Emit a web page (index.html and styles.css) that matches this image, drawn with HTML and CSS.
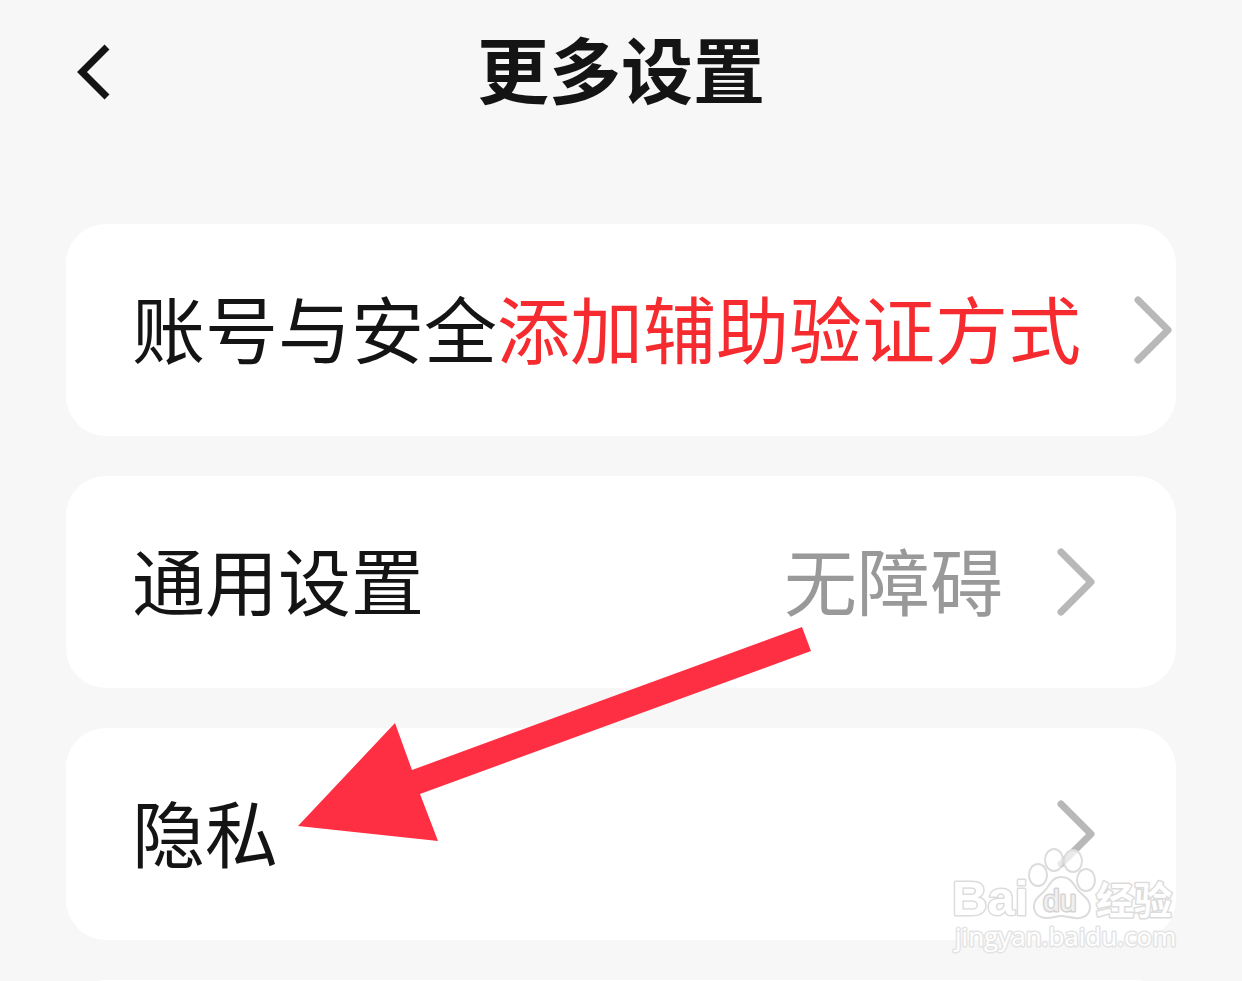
FILE: index.html
```html
<!DOCTYPE html>
<html lang="zh-CN">
<head>
	<meta charset="utf-8">
	<meta name="viewport" content="width=device-width, initial-scale=1">
	<title>更多设置</title>
	<link rel="stylesheet" href="styles.css">
</head>
<body>
	<header class="topbar">
		<button type="button" class="back" aria-label="返回">
			<svg width="36" height="60" viewBox="0 0 36 60"><path d="M32 5 L7 30 L32 55"/></svg>
		</button>
		<h1 class="title">更多设置</h1>
	</header>

	<main class="settings">
		<a class="card card-wide" href="#account">
			<span class="label">账号与安全<span class="warning">添加辅助验证方式</span></span>
			<svg class="chevron" width="38" height="68" viewBox="0 0 38 68"><path d="M4 4 L34 34 L4 64"/></svg>
		</a>
		<a class="card" href="#general">
			<span class="label">通用设置</span>
			<span class="value">无障碍</span>
			<svg class="chevron" width="38" height="68" viewBox="0 0 38 68"><path d="M4 4 L34 34 L4 64"/></svg>
		</a>
		<a class="card" href="#privacy">
			<span class="label">隐私</span>
			<svg class="chevron" width="38" height="68" viewBox="0 0 38 68"><path d="M4 4 L34 34 L4 64"/></svg>
		</a>
		<div class="card"></div>
	</main>

	<!-- red pointer to the privacy row -->
	<svg class="arrow" width="514" height="216" viewBox="0 0 514 216">
		<polygon points="0,199 97,96 114,143 504,0 513,24 122,167 140,214"/>
	</svg>

	<!-- watermark -->
	<svg class="watermark" width="230" height="116" viewBox="0 0 230 116">
		<text class="wm-bai" x="2" y="74">Bai</text>
		<ellipse cx="88" cy="34" rx="9" ry="11"/>
		<ellipse cx="104" cy="19" rx="9" ry="11"/>
		<ellipse cx="123" cy="20" rx="9" ry="11"/>
		<ellipse cx="136" cy="39" rx="9" ry="11"/>
		<path d="M111 36 C119 36 123 41 127 48 C132 55 140 57 140 66 C140 74 133 78 125 77 C118 76 115 75 111 75 C106 75 103 77 97 77 C88 77 84 72 84 65 C84 57 91 55 97 47 C101 41 104 36 111 36 Z"/>
		<text class="wm-du" x="93" y="70">du</text>
		<text class="wm-cjk" x="146" y="73">经验</text>
		<text class="wm-url" x="5" y="105">jingyan.baidu.com</text>
	</svg>
</body>
</html>
```

FILE: styles.css
```css
* {
	box-sizing: border-box;
}

body {
	position: relative;
	height: 100vh;
	margin: 0;
	overflow: hidden;
	background: #f7f7f7;
	color: #141414;
	font-family: "Noto Sans CJK SC", sans-serif;
}

.topbar {
	display: grid;
	grid-template-columns: 100px 1fr 100px;
	align-items: center;
	height: 144px;
	padding: 0 70px;
}

.back {
	width: 36px;
	height: 60px;
	padding: 0;
	margin-left: 5px;
	border: 0;
	background: none;
}

.back svg {
	display: block;
	fill: none;
	stroke: #141414;
	stroke-width: 7;
}

.title {
	margin: 0;
	padding-bottom: 10px;
	font-size: 72px;
	font-weight: 700;
	line-height: 108px;
	text-align: center;
}

.settings {
	display: flex;
	flex-direction: column;
	gap: 40px;
	padding: 80px 66px 0;
}

.card {
	display: flex;
	flex: none;
	align-items: center;
	height: 212px;
	padding: 0 81px 0 66px;
	border-radius: 40px;
	background: #fff;
	color: #141414;
	font-size: 73px;
	line-height: 108px;
	text-decoration: none;
	white-space: nowrap;
}

.card-wide {
	padding-right: 4px;
}

.label,
.value {
	padding-bottom: 8px;
}

.label {
	flex: 1;
}

.warning {
	color: #f52b2f;
}

.value {
	margin-right: 54px;
	color: #999;
}

.chevron {
	flex: none;
	fill: none;
	stroke: #b8b8b8;
	stroke-width: 7;
	stroke-linecap: round;
	stroke-linejoin: round;
}

.arrow {
	position: absolute;
	left: 298px;
	top: 627px;
	fill: #ff2f43;
}

.watermark {
	position: absolute;
	left: 950px;
	top: 841px;
	fill: rgba(255, 255, 255, 0.7);
	stroke: #dcdcdc;
	stroke-width: 2;
}

.watermark text {
	fill: #fff;
	stroke-width: 3;
	stroke-linejoin: round;
	paint-order: stroke;
}

.wm-bai {
	font: bold 49px "Liberation Sans", sans-serif;
}

.watermark .wm-du {
	font: 30px "Liberation Sans", sans-serif;
	fill: #f0f0f0;
	stroke: #d4d4d4;
}

.wm-cjk {
	font: bold 38px "Noto Sans CJK SC", sans-serif;
}

.watermark .wm-url {
	font: 26px "Open Sans", sans-serif;
	stroke: #e4e4e4;
}
```
